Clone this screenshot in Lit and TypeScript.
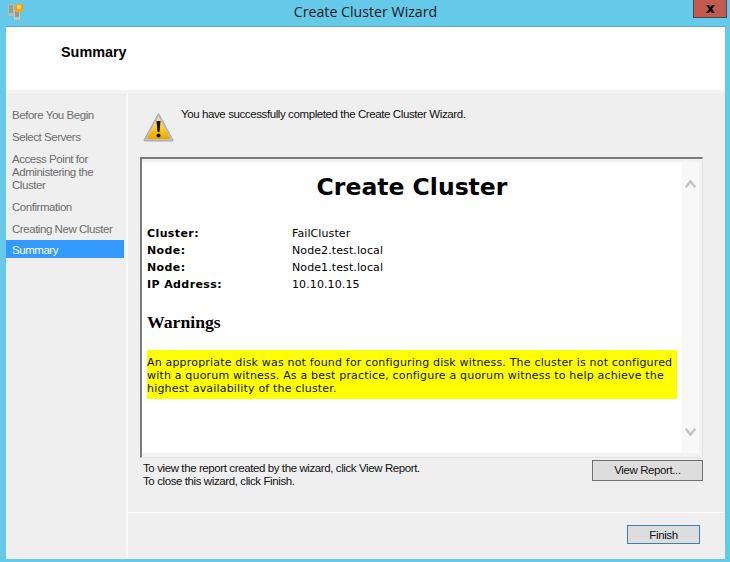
import { LitElement, html, css } from "lit";
import { customElement } from "lit/decorators.js";

@customElement("app-root")
class AppRoot extends LitElement {
  static styles = css`
    :host { display: block; position: relative; width: 730px; height: 562px; background: #65c9ea; overflow: hidden; font-family: "Liberation Sans", Arial, sans-serif; font-size: 11.5px; color: #111; }
    .titlebar { height: 27px; display: flex; align-items: center; justify-content: center; font-family: "Open Sans", sans-serif; font-size: 14.2px; color: #1a1a1a; padding-bottom: 3px; box-sizing: border-box; border-bottom: 1px solid #5fa8c4; margin-left: 6px; margin-right: 5px; }
    .appicon { position: absolute; left: 8px; top: 3px; }
    .close { position: absolute; left: 693px; top: 0; width: 34px; height: 18px; box-sizing: border-box; background: #c25a50; border: 1px solid #4a4a4a; border-top: none; display: flex; align-items: center; justify-content: center; }
    .client { margin: 0 5px 0 6px; height: 532px; display: flex; flex-direction: column; background: #efefef; }
    .header { height: 63px; background: #fff; padding: 17px 0 0 55px; box-sizing: border-box; font-weight: bold; font-size: 14.4px; color: #000; flex: none; line-height: 16px; }
    .rule { height: 3px; background: #f3f3f3; flex: none; }
    .body { flex: 1; display: flex; min-height: 0; }
    .side { width: 118px; padding: 16px 0 0 0; flex: none; color: #6d6d6d; margin-right: 2px; letter-spacing: -0.45px; }
    .side div { padding: 0 6px; line-height: 13px; margin-bottom: 9px; }
    .side .sel { background: #3399ff; color: #fff; line-height: 16px; padding-top: 2px; margin-top: -5px; }
    .vline { width: 2px; background: #fbfbfb; flex: none; }
    .main { flex: 1; display: flex; flex-direction: column; min-width: 0; }
    .msg { height: 64px; box-sizing: border-box; padding: 15px 0 0 15px; display: flex; gap: 7px; flex: none; letter-spacing: -0.4px; line-height: 13px; color: #111; }
    .msg svg { margin-top: 4px; margin-top: 4px; flex: none; }
    .report { height: 301px; width: 563px; margin-left: 12px; box-sizing: border-box; flex: none; border-style: solid; border-width: 2px 1px 1px 2px; border-color: #7a7a7a #e4e4e4 #e4e4e4 #7a7a7a; background: #f2f2f2; display: flex; }
    .rc { width: 540px; flex: none; margin: 3px 0 4px; background: #fff; padding: 0 5px; box-sizing: border-box; font-family: "DejaVu Sans", Verdana, sans-serif; font-size: 11px; color: #000; }
    .rc h1 { margin: 11px 0 24px; text-align: center; font-size: 23.5px; line-height: 28px; font-weight: bold; font-family: "DejaVu Sans", Verdana, sans-serif; }
    .kv { display: grid; grid-template-columns: 145px 1fr; line-height: 17px; letter-spacing: 0.1px; }
    .kv b { font-weight: bold; letter-spacing: 0.4px; }
    .rc h2 { font-family: "Liberation Serif", "Times New Roman", serif; font-size: 17.7px; font-weight: bold; margin: 19px 0 18px; line-height: 20px; }
    .warn { background: #ffff00; line-height: 13px; padding: 6px 0 0 0; width: 530px; height: 49px; box-sizing: border-box; color: #111; letter-spacing: 0.18px; }
    .sb { width: 17px; flex: none; background: #f8f8f8; margin: 3px 0 4px; display: flex; flex-direction: column; justify-content: space-between; align-items: center; padding: 17px 0 16px; box-sizing: border-box; }
    .notes { display: flex; justify-content: space-between; width: 563px; margin: 2px 0 0 12px; letter-spacing: -0.4px; flex: none; line-height: 13px; }
    .notes p { margin: 2px 0 0 3px; }
    button { font: inherit; background: #dddddd; color: #111; box-sizing: border-box; padding: 0; letter-spacing: -0.4px; }
    .vr { width: 111px; height: 21px; border: 1px solid #707070; }
    .spacer { flex: 1; }
    .foot { height: 47px; box-sizing: border-box; border-top: 1px solid #fbfbfb; display: flex; justify-content: flex-end; padding: 12px 25px 0 0; flex: none; }
    .fin { width: 73px; height: 19px; border: 1px solid #3c7fb1; }
  `;
  render() {
    return html`
      <div class="titlebar">Create Cluster Wizard</div>
      <svg class="appicon" width="17" height="17" viewBox="0 0 17 17">
        <rect x="0" y="1" width="6" height="12" fill="#b8bcb8"/><path d="M1 3h4M1 5h4M1 7h4M1 9h4" stroke="#6f8f6f"/>
        <rect x="6" y="7" width="6" height="10" fill="#c4c8c4"/><path d="M7 9h4M7 11h4M7 13h4" stroke="#666"/>
        <circle cx="11" cy="5" r="4.5" fill="#f2a31c"/><circle cx="11" cy="4" r="2.2" fill="#ffd35a"/>
      </svg>
      <div class="close">
        <svg width="9" height="8" viewBox="0 0 9 8"><path d="M0 0h3l1.500 2 1.500-2h3L6 4l3 4H6L4.500 6 3 8H0l3-4z" fill="#111"/></svg>
      </div>
      <div class="client">
        <div class="header">Summary</div>
        <div class="rule"></div>
        <div class="body">
          <div class="side">
            <div>Before You Begin</div>
            <div>Select Servers</div>
            <div>Access Point for Administering the Cluster</div>
            <div>Confirmation</div>
            <div>Creating New Cluster</div>
            <div class="sel">Summary</div>
          </div>
          <div class="vline"></div>
          <div class="main">
            <div class="msg">
              <svg width="31" height="30" viewBox="0 0 31 30">
                <defs><linearGradient id="g" x1="0" y1="0" x2="0" y2="1"><stop offset="0" stop-color="#ffe98a"/><stop offset="0.6" stop-color="#fbc515"/><stop offset="1" stop-color="#eea400"/></linearGradient></defs>
                <path d="M15.500 1.500 L30 28 Q30.500 29 29 29 H2 Q.5 29 1 28Z" fill="#c0c0c0" stroke="#a8a8a8"/>
                <path d="M15.500 5 L27.500 27 H3.500Z" fill="url(#g)"/>
                <path d="M13.500 9h4l-1 11h-2z" fill="#111"/><circle cx="15.500" cy="23.500" r="2" fill="#111"/>
              </svg>
              <span>You have successfully completed the Create Cluster Wizard.</span>
            </div>
            <div class="report">
              <div class="rc">
                <h1>Create Cluster</h1>
                <div class="kv">
                  <b>Cluster:</b><span>FailCluster</span>
                  <b>Node:</b><span>Node2.test.local</span>
                  <b>Node:</b><span>Node1.test.local</span>
                  <b>IP Address:</b><span>10.10.10.15</span>
                </div>
                <h2>Warnings</h2>
                <div class="warn">An appropriate disk was not found for configuring disk witness. The cluster is not configured with a quorum witness. As a best practice, configure a quorum witness to help achieve the highest availability of the cluster.</div>
              </div>
              <div class="sb">
                <svg width="11" height="9" viewBox="0 0 11 9"><path d="M.8 8.200 5.500 2.500l4.700 5.700" fill="none" stroke="#c4c4c4" stroke-width="2.500"/></svg>
                <svg width="11" height="9" viewBox="0 0 11 9"><path d="M.8.800 5.500 6.500 10.200.800" fill="none" stroke="#c4c4c4" stroke-width="2.500"/></svg>
              </div>
            </div>
            <div class="notes">
              <p>To view the report created by the wizard, click View Report.<br>To close this wizard, click Finish.</p>
              <button class="vr">View Report...</button>
            </div>
            <div class="spacer"></div>
            <div class="foot"><button class="fin">Finish</button></div>
          </div>
        </div>
      </div>
    `;
  }
}
